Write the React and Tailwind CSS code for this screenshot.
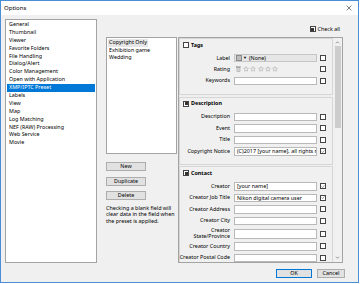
import React from "react";

const leftItems = [
  "General",
  "Thumbnail",
  "Viewer",
  "Favorite Folders",
  "File Handling",
  "Dialog/Alert",
  "Color Management",
  "Open with Application",
  "XMP/IPTC Preset",
  "Labels",
  "View",
  "Map",
  "Log Matching",
  "NEF (RAW) Processing",
  "Web Service",
  "Movie",
];

const presets = ["Copyright Only", "Exhibition game", "Wedding"];

// small win10-ish checkbox, state: "off" | "on" | "mixed"
const Check = ({ state = "off" }) => (
  <div className="w-[6px] h-[6px] border border-[#444] bg-white flex items-center justify-center shrink-0">
    {state === "mixed" && <div className="w-[3px] h-[3px] bg-[#333]" />}
    {state === "on" && (
      <svg width="5" height="5" viewBox="0 0 10 10">
        <polyline points="1.5,5 4,7.5 8.5,2" fill="none" stroke="#555" strokeWidth="1.4" />
      </svg>
    )}
  </div>
);

const Star = () => (
  <svg width="6" height="6" viewBox="0 0 24 24">
    <path
      d="M12 2.5l2.9 6.2 6.8.7-5.1 4.6 1.5 6.7L12 17.3l-5.9 3.4 1.4-6.7-5.1-4.6 6.8-.7z"
      fill="none"
      stroke="#9a9a9a"
      strokeWidth="1.8"
    />
  </svg>
);

const Field = ({ label, value, state = "off", tall }) => (
  <div className={`flex items-center ${tall ? "h-[11px]" : "h-[8.5px]"}`}>
    <div className={`w-[50px] flex justify-end text-right leading-[5.5px] ${tall ? "" : "whitespace-nowrap"}`}>
      <span>{label}</span>
    </div>
    <div
      className={`ml-[4px] w-[83px] border border-[#b9b9b9] bg-white px-[2px] flex items-center overflow-hidden whitespace-nowrap ${
        tall ? "h-[10px]" : "h-[8.5px]"
      }`}
    >
      {value}
    </div>
    <div className="ml-[3px]">
      <Check state={state} />
    </div>
  </div>
);

const Section = ({ title, state, children, pb = "pb-[10px]" }) => (
  <div className={`border border-[#d6d6d6] pt-[3px] ${pb}`}>
    <div className="flex items-center h-[6px] pl-[3px] gap-[2px]">
      <Check state={state} />
      <span className="font-bold">{title}</span>
    </div>
    <div className="mt-[6px] flex flex-col gap-[3px]">{children}</div>
  </div>
);

export default function App() {
  return (
    <div
      className="w-[360px] h-[284px] bg-white text-[5.4px] text-black"
      style={{ fontFamily: '"Segoe UI", "Noto Sans", sans-serif' }}
    >
      <div className="w-[359px] h-[283px] border border-[#4a8fd6] bg-[#f0f0f0] flex flex-col">
        {/* title bar */}
        <div className="h-[14px] bg-white flex items-center justify-between shrink-0">
          <span className="pl-[3px] text-[6px]">Options</span>
          <svg width="6" height="6" viewBox="0 0 10 10" className="mr-[6px]">
            <path d="M1 1L9 9M9 1L1 9" stroke="#111" strokeWidth="0.9" />
          </svg>
        </div>

        {/* body */}
        <div className="flex-1 flex flex-col pl-[4px] pt-[4px]">
          <div className="flex h-[244px]">
            {/* left list */}
            <div className="w-[92px] h-full border border-[#a3a3a3] bg-white p-[1px]">
              {leftItems.map((it) => (
                <div
                  key={it}
                  className={`h-[7.9px] leading-[7.9px] pl-[2px] whitespace-nowrap ${
                    it === "XMP/IPTC Preset" ? "bg-[#0078d7] text-white" : ""
                  }`}
                >
                  {it}
                </div>
              ))}
            </div>

            {/* preset column */}
            <div className="ml-[9px] w-[71px] flex flex-col pt-[18px]">
              <div className="h-[117px] border border-[#a3a3a3] bg-white p-[1px]">
                {presets.map((p, i) => (
                  <div key={p} className="h-[7.6px] leading-[7.6px]">
                    <span className={`px-[1px] inline-block ${i === 0 ? "bg-[#e6e6e6]" : ""}`}>{p}</span>
                  </div>
                ))}
              </div>
              <div className="flex flex-col gap-[5.5px] mt-[8px]">
                {["New", "Duplicate", "Delete"].map((b) => (
                  <div
                    key={b}
                    className="w-[40px] h-[9px] border border-[#adadad] bg-[#e1e1e1] flex items-center justify-center"
                  >
                    {b}
                  </div>
                ))}
              </div>
              <p className="mt-[5px] leading-[6.3px] whitespace-nowrap">
                Checking a blank field will
                <br />
                clear data in the field when
                <br />
                the preset is applied.
              </p>
            </div>

            {/* right column */}
            <div className="ml-[1px] w-[165px] flex flex-col">
              <div className="h-[18px] pt-[7px] flex justify-end pr-[3px]">
                <div className="flex items-center h-[6px] gap-[2px]">
                  <Check state="mixed" />
                  <span>Check all</span>
                </div>
              </div>
              <div className="flex-1 border border-[#a3a3a3] bg-[#f0f0f0] flex overflow-hidden">
                <div className="w-[154px] flex flex-col gap-[1.5px] overflow-hidden">
                  <Section title="Tags" state="off" pb="pb-[9px]">
                    <div className="flex items-center h-[8px]">
                      <div className="w-[50px] text-right">Label</div>
                      <div className="ml-[4px] w-[83px] h-[8px] border border-[#c6c6c6] bg-[#e6e6e6] flex items-center pl-[1px]">
                        <div className="w-[6px] h-[6px] border border-[#8a8a8a] bg-[#bdbdbd]" />
                        <span className="ml-[1px] text-[4px]">▼</span>
                        <span className="ml-[2px]">(None)</span>
                      </div>
                      <div className="ml-[3px]">
                        <Check />
                      </div>
                    </div>
                    <div className="flex items-center h-[8.5px]">
                      <div className="w-[50px] text-right">Rating</div>
                      <div className="ml-[6px] w-[81px] flex items-center gap-[1.2px]">
                        <svg width="5" height="6" viewBox="0 0 10 12" className="mr-[1px]">
                          <rect x="1" y="1" width="8" height="2" fill="none" stroke="#8a8a8a" strokeWidth="1" />
                          <rect x="2" y="3.5" width="6" height="7.5" fill="none" stroke="#8a8a8a" strokeWidth="1" />
                          <path d="M4 5v4M6 5v4" stroke="#8a8a8a" strokeWidth="0.8" />
                        </svg>
                        <Star />
                        <Star />
                        <Star />
                        <Star />
                        <Star />
                      </div>
                      <div className="ml-[3px]">
                        <Check />
                      </div>
                    </div>
                    <Field label="Keywords" value="" />
                  </Section>

                  <Section title="Description" state="mixed" pb="pb-[8px]">
                    <Field label="Description" value="" />
                    <Field label="Event" value="" />
                    <Field label="Title" value="" />
                    <Field
                      label="Copyright Notice"
                      value="(C)2017 [your name], all rights reserved."
                      state="on"
                    />
                  </Section>

                  <Section title="Contact" state="mixed">
                    <Field label="Creator" value="[your name]" state="on" />
                    <Field label="Creator Job Title" value="Nikon digital camera user" state="on" />
                    <Field label="Creator Address" value="" />
                    <Field label="Creator City" value="" />
                    <Field
                      label={
                        <>
                          Creator
                          <br />
                          State/Province
                        </>
                      }
                      value=""
                      tall
                    />
                    <Field label="Creator Country" value="" />
                    <Field label="Creator Postal Code" value="" />
                  </Section>
                </div>

                {/* scrollbar */}
                <div className="w-[9px] bg-[#f0f0f0] flex flex-col items-center">
                  <svg width="5" height="5" viewBox="0 0 10 10" className="mt-[2px]">
                    <polyline points="2,6.5 5,3.5 8,6.5" fill="none" stroke="#606060" strokeWidth="1.3" />
                  </svg>
                  <div className="mt-[1px] w-[6px] h-[82px] bg-[#cdcdcd]" />
                  <div className="flex-1" />
                  <svg width="5" height="5" viewBox="0 0 10 10" className="mb-[2px]">
                    <polyline points="2,3.5 5,6.5 8,3.5" fill="none" stroke="#606060" strokeWidth="1.3" />
                  </svg>
                </div>
              </div>
            </div>
          </div>

          {/* footer */}
          <div className="flex justify-end gap-[5px] mt-[6px] pr-[13px]">
            <div className="w-[36px] h-[9px] border border-[#0078d7] bg-[#e1e1e1] flex items-center justify-center">
              OK
            </div>
            <div className="w-[28px] h-[9px] border border-[#adadad] bg-[#e1e1e1] flex items-center justify-center">
              Cancel
            </div>
          </div>
        </div>
      </div>
    </div>
  );
}
